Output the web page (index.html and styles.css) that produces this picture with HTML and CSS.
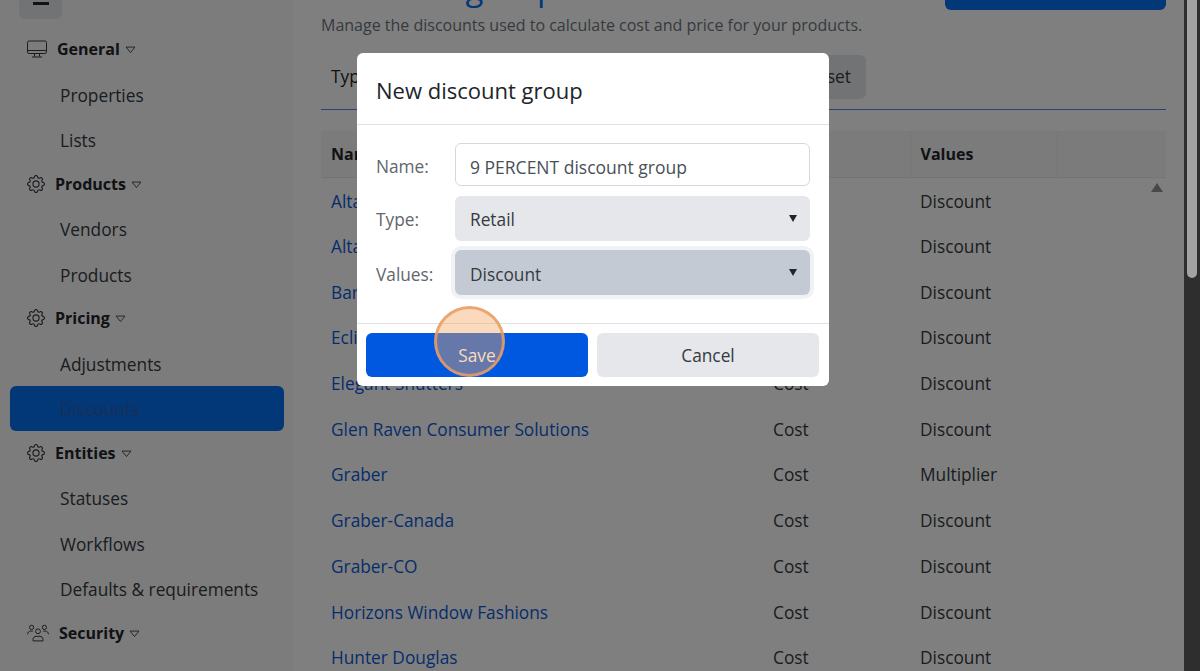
FILE: index.html
```html
<!DOCTYPE html>
<html lang="en">
<head>
<meta charset="utf-8">
<title>Discount groups</title>
<link rel="stylesheet" href="styles.css">
</head>
<body>
<svg class="defs" width="0" height="0" aria-hidden="true">
  <symbol id="gear" viewBox="0 0 16 16">
    <path fill="currentColor" d="M8 4.754a3.246 3.246 0 1 0 0 6.492 3.246 3.246 0 0 0 0-6.492zM5.754 8a2.246 2.246 0 1 1 4.492 0 2.246 2.246 0 0 1-4.492 0z"/>
    <path fill="currentColor" d="M9.796 1.343c-.527-1.79-3.065-1.79-3.592 0l-.094.319a.873.873 0 0 1-1.255.52l-.292-.16c-1.64-.892-3.433.902-2.54 2.541l.159.292a.873.873 0 0 1-.52 1.255l-.319.094c-1.79.527-1.79 3.065 0 3.592l.319.094a.873.873 0 0 1 .52 1.255l-.16.292c-.892 1.64.901 3.434 2.541 2.54l.292-.159a.873.873 0 0 1 1.255.52l.094.319c.527 1.79 3.065 1.79 3.592 0l.094-.319a.873.873 0 0 1 1.255-.52l.292.16c1.64.893 3.434-.902 2.54-2.541l-.159-.292a.873.873 0 0 1 .52-1.255l.319-.094c1.79-.527 1.79-3.065 0-3.592l-.319-.094a.873.873 0 0 1-.52-1.255l.16-.292c.893-1.64-.902-3.433-2.541-2.54l-.292.159a.873.873 0 0 1-1.255-.52l-.094-.319zm-2.633.283c.246-.835 1.428-.835 1.674 0l.094.319a1.873 1.873 0 0 0 2.693 1.115l.291-.16c.764-.415 1.6.42 1.184 1.185l-.159.292a1.873 1.873 0 0 0 1.116 2.692l.318.094c.835.246.835 1.428 0 1.674l-.319.094a1.873 1.873 0 0 0-1.115 2.693l.16.291c.415.764-.42 1.6-1.185 1.184l-.291-.159a1.873 1.873 0 0 0-2.693 1.116l-.094.318c-.246.835-1.428.835-1.674 0l-.094-.319a1.873 1.873 0 0 0-2.692-1.115l-.292.16c-.764.415-1.6-.42-1.184-1.185l.159-.291A1.873 1.873 0 0 0 1.945 8.93l-.319-.094c-.835-.246-.835-1.428 0-1.674l.319-.094A1.873 1.873 0 0 0 3.06 4.377l-.16-.292c-.415-.764.42-1.6 1.185-1.184l.292.159a1.873 1.873 0 0 0 2.692-1.115l.094-.319z"/>
  </symbol>
  <symbol id="caret" viewBox="0 0 12 9">
    <path fill="none" stroke="currentColor" d="M1 1.2h10L6 7.4z"/>
  </symbol>
</svg>

<div class="page">
  <aside class="sidebar">
    <div class="toggle"><span class="toggle-bar"></span></div>
    <nav class="nav">
      <div class="group">
        <svg class="ico ico-monitor" viewBox="0 0 20 17"><g fill="none" stroke="currentColor" stroke-width="1"><rect x=".5" y=".5" width="19" height="12.5" rx="1.6"/><path d="M.5 10h19M7.5 13v3M12.5 13v3M5 16.5h10"/></g></svg>
        <span class="group-name">General</span>
        <svg class="caret"><use href="#caret"/></svg>
      </div>
      <a class="item">Properties</a>
      <a class="item">Lists</a>
      <div class="group">
        <svg class="ico"><use href="#gear"/></svg>
        <span class="group-name">Products</span>
        <svg class="caret"><use href="#caret"/></svg>
      </div>
      <a class="item">Vendors</a>
      <a class="item">Products</a>
      <div class="group">
        <svg class="ico"><use href="#gear"/></svg>
        <span class="group-name">Pricing</span>
        <svg class="caret"><use href="#caret"/></svg>
      </div>
      <a class="item">Adjustments</a>
      <a class="item item-active">Discounts</a>
      <div class="group">
        <svg class="ico"><use href="#gear"/></svg>
        <span class="group-name">Entities</span>
        <svg class="caret"><use href="#caret"/></svg>
      </div>
      <a class="item">Statuses</a>
      <a class="item">Workflows</a>
      <a class="item">Defaults &amp; requirements</a>
      <div class="group">
        <svg class="ico ico-people" viewBox="0 0 22 17"><g fill="none" stroke="currentColor" stroke-width="1"><circle cx="11" cy="6.8" r="2.4"/><path d="M6 16.4v-1.6c0-1.8 1.6-3 3-3h4c1.4 0 3 1.2 3 3v1.6z"/><circle cx="4.6" cy="2.9" r="2.1"/><circle cx="17.4" cy="2.9" r="2.1"/><path d="M.6 9.8c0-2 1.4-3.2 3-3.2h2.2M21.4 9.8c0-2-1.4-3.2-3-3.2h-2.2"/></g></svg>
        <span class="group-name">Security</span>
        <svg class="caret"><use href="#caret"/></svg>
      </div>
      <a class="item">Users and roles</a>
    </nav>
  </aside>

  <main class="main">
    <div class="head">
      <div class="head-text">
        <h1 class="title">Discount groups</h1>
        <p class="subtitle">Manage the discounts used to calculate cost and price for your products.</p>
      </div>
      <button class="new-btn">New discount group</button>
    </div>
    <div class="filters">
      <span class="filter-label">Type:</span>
      <button class="reset-btn">Reset</button>
    </div>
    <table class="grid">
      <thead>
        <tr><th class="c-name">Name</th><th class="c-type">Type</th><th class="c-values">Values</th><th class="c-end"></th></tr>
      </thead>
      <tbody>
        <tr><td><a>Alta Window Fashions</a></td><td>Cost</td><td>Discount</td><td></td></tr>
        <tr><td><a>Alta-Canada</a></td><td>Cost</td><td>Discount</td><td></td></tr>
        <tr><td><a>Barlow Shades</a></td><td>Cost</td><td>Discount</td><td></td></tr>
        <tr><td><a>Eclipse Shutters</a></td><td>Cost</td><td>Discount</td><td></td></tr>
        <tr><td><a>Elegant Shutters</a></td><td>Cost</td><td>Discount</td><td></td></tr>
        <tr><td><a>Glen Raven Consumer Solutions</a></td><td>Cost</td><td>Discount</td><td></td></tr>
        <tr><td><a>Graber</a></td><td>Cost</td><td>Multiplier</td><td></td></tr>
        <tr><td><a>Graber-Canada</a></td><td>Cost</td><td>Discount</td><td></td></tr>
        <tr><td><a>Graber-CO</a></td><td>Cost</td><td>Discount</td><td></td></tr>
        <tr><td><a>Horizons Window Fashions</a></td><td>Cost</td><td>Discount</td><td></td></tr>
        <tr><td><a>Hunter Douglas</a></td><td>Cost</td><td>Discount</td><td></td></tr>
      </tbody>
    </table>
  </main>

  <div class="table-arrow"></div>
  <div class="overlay"></div>
  <div class="scrollbar"><div class="scroll-thumb"></div></div>

  <section class="modal">
    <header class="modal-head"><h2 class="modal-title">New discount group</h2></header>
    <div class="modal-body">
      <label class="lbl">Name:</label>
      <input class="inp" type="text" value="9 PERCENT discount group">
      <label class="lbl">Type:</label>
      <div class="sel">Retail</div>
      <label class="lbl">Values:</label>
      <div class="sel sel-focus">Discount</div>
    </div>
    <footer class="modal-foot">
      <button class="btn btn-save">Save</button>
      <button class="btn btn-cancel">Cancel</button>
    </footer>
  </section>
  <div class="spot"></div>
</div>
</body>
</html>
```
FILE: styles.css
```css
* { box-sizing: border-box; }
html, body { margin: 0; height: 100%; overflow: hidden; }
body { font-family: "Open Sans", "Noto Sans", "Liberation Sans", sans-serif; font-size: 17.3px; color: #212529; background: #fff; }
.defs { position: absolute; }
.page { position: relative; display: flex; width: 1200px; height: 671px; overflow: hidden; }

.sidebar { width: 293px; flex: none; background: #f9f9f9; padding: 0 9px 0 10px; margin-top: -21px; height: 760px; }
.toggle { width: 43px; height: 40px; margin-left: 9px; background: #e5e7eb; border-radius: 6px; display: flex; align-items: center; justify-content: center; }
.toggle-bar { width: 16px; height: 3px; background: #212529; margin-top: 9px; }
.nav { display: flex; flex-direction: column; margin-top: 8.7px; }
.group { display: flex; align-items: center; height: 43.3px; padding-left: 17px; color: #212529; }
.ico { width: 18px; height: 18px; flex: none; color: #343a40; margin-right: 10px; }
.ico-monitor { width: 20px; }
.ico-people { width: 22px; }
.group-name { font-weight: 700; font-size: 16px; }
.caret { width: 11px; height: 8px; margin-left: 5px; color: #343a40; margin-top: 2px; }
.item { display: flex; align-items: center; height: 45.6px; padding: 2.5px 0 0 50px; color: #343a40; border-radius: 6px; }
.item-active { background: #0670f0; color: #2f5fae; }

.main { flex: 1; min-width: 0; padding: 0 18px 0 28px; margin-right: 16px; background: #fff; }
.head { display: flex; justify-content: space-between; align-items: flex-start; margin-top: -34px; }
.title { margin: 0; font-size: 33px; line-height: 44px; font-weight: 400; color: #0670f0; }
.subtitle { margin: 4px 0 0; font-size: 16px; line-height: 22px; color: #6c757d; }
.new-btn { width: 221px; height: 44px; border: 0; border-radius: 6px; background: #0670f0; color: #fff; font: inherit; }
.filters { display: flex; align-items: center; justify-content: space-between; height: 55px; margin-top: 19px; border-bottom: 1px solid #4f86e0; padding: 0 300px 11px 10px; }
.reset-btn { width: 80px; height: 44px; border: 0; border-radius: 6px; background: #e5e7eb; color: #343a40; font: inherit; text-align: right; padding-right: 15px; }

.grid { width: 100%; margin-top: 21px; border-collapse: collapse; table-layout: fixed; }
.grid th { height: 46px; padding: 0 10px; text-align: left; font-weight: 700; font-size: 16px; background: #f7f7f7; border-bottom: 1px solid #e9e9e9; border-right: 1px solid #ececec; }
.grid td { height: 45.7px; padding: 2px 10px 0; color: #343a40; }
.c-name { width: 442px; }
.c-type { width: 147px; }
.c-values { width: 147px; }
.grid th.c-end { border-right: 0; }
.grid a { color: #0d5ad6; }

.scrollbar { position: absolute; right: 0; top: 0; width: 16px; height: 671px; background: #2e2e2e; }
.scroll-thumb { width: 10px; height: 286px; margin: -8px 0 0 3px; background: #a3a3a3; border-radius: 5px; }
.table-arrow { position: absolute; left: 1151px; top: 183px; width: 0; height: 0; border-left: 6px solid transparent; border-right: 6px solid transparent; border-bottom: 9px solid #909090; }
.overlay { position: absolute; inset: 0; background: rgba(0, 0, 0, .5); }

.modal { position: absolute; left: 357px; top: 53px; width: 472px; height: 333px; background: #fff; border-radius: 6px; display: flex; flex-direction: column; }
.modal-head { height: 72px; border-bottom: 1px solid #dee2e6; padding: 2px 19px 0; display: flex; align-items: center; }
.modal-title { margin: 0; font-size: 22px; font-weight: 400; color: #212529; }
.modal-body { flex: 1; display: grid; grid-template-columns: 79px 355px; grid-template-rows: 43px 45px 45px; row-gap: 9.5px; padding: 18px 19px 0; align-items: center; }
.lbl { color: #5f666d; padding-top: 3px; }
.inp { width: 100%; height: 43px; border: 1px solid #d5d9de; border-radius: 6px; padding: 4px 14px 0; font: inherit; font-size: 17.5px; color: #495057; background: #fff; }
.sel { position: relative; height: 45px; display: flex; align-items: center; padding: 3px 0 0 15px; background: #e5e7eb; border-radius: 6px; color: #343a40; }
.sel::after { content: ""; position: absolute; right: 13px; top: 19px; border-left: 4.5px solid transparent; border-right: 4.5px solid transparent; border-top: 7px solid #212529; }
.sel-focus { background: #c4cad3; box-shadow: 0 0 0 4px #f0f2f6; }
.modal-foot { height: 63px; border-top: 1px solid #dee2e6; display: flex; gap: 9px; padding: 8.5px 10px 0 9px; }
.btn { width: 222px; height: 44px; border: 0; border-radius: 6px; padding-top: 2px; font: inherit; }
.btn-save { background: #0058e0; color: #fff; }
.btn-cancel { background: #e5e7eb; color: #343a40; }
.spot { position: absolute; left: 434px; top: 306px; width: 71px; height: 71px; border-radius: 50%; border: 3px solid rgba(232, 157, 100, .85); background: rgba(244, 164, 96, .42); }
```
